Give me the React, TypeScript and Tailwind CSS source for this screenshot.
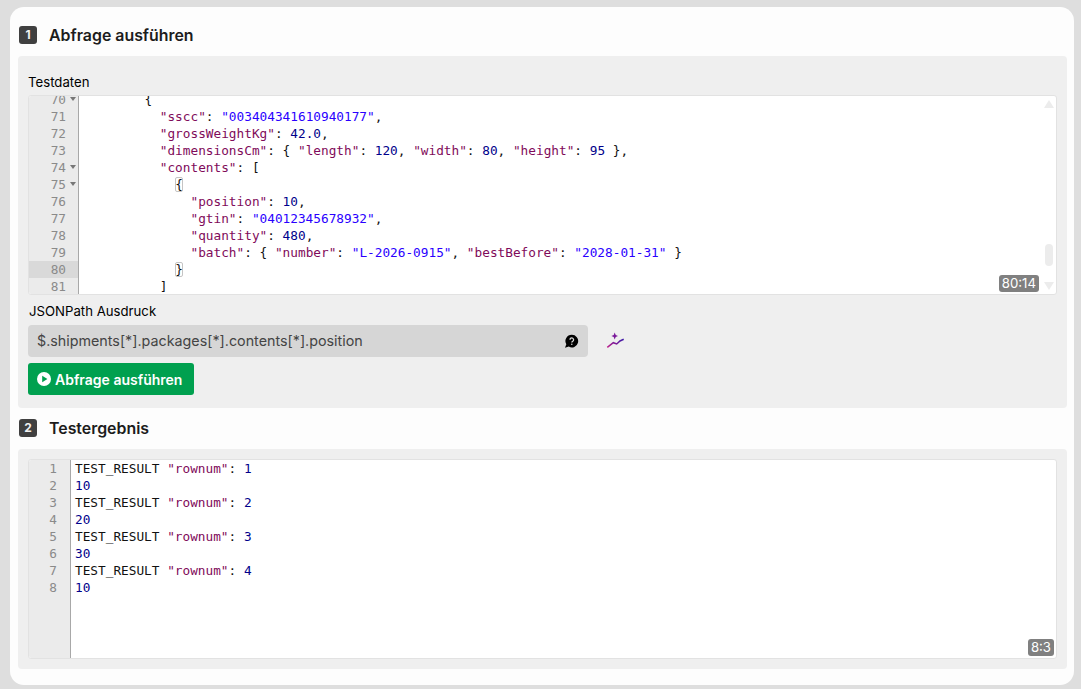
import React from "react";

type Tok = [string, string];
const K = "text-[#7f0b5a]";
const S = "text-[#2a00ff]";
const N = "text-[#00008b]";
const P = "text-[#111111]";

function k(t: string): Tok { return [t, K]; }
function s(t: string): Tok { return [t, S]; }
function n(t: string): Tok { return [t, N]; }
function p(t: string): Tok { return [t, P]; }

const jsonLines: { no: number; fold?: boolean; active?: boolean; indent: number; toks: Tok[]; box?: boolean }[] = [
  { no: 70, fold: true, indent: 8, toks: [p("{")] },
  { no: 71, indent: 10, toks: [k('"sscc"'), p(": "), s('"003404341610940177"'), p(",")] },
  { no: 72, indent: 10, toks: [k('"grossWeightKg"'), p(": "), n("42.0"), p(",")] },
  { no: 73, indent: 10, toks: [k('"dimensionsCm"'), p(": { "), k('"length"'), p(": "), n("120"), p(", "), k('"width"'), p(": "), n("80"), p(", "), k('"height"'), p(": "), n("95"), p(" },")] },
  { no: 74, fold: true, indent: 10, toks: [k('"contents"'), p(": [")] },
  { no: 75, fold: true, indent: 12, box: true, toks: [p("{")] },
  { no: 76, indent: 14, toks: [k('"position"'), p(": "), n("10"), p(",")] },
  { no: 77, indent: 14, toks: [k('"gtin"'), p(": "), s('"04012345678932"'), p(",")] },
  { no: 78, indent: 14, toks: [k('"quantity"'), p(": "), n("480"), p(",")] },
  { no: 79, indent: 14, toks: [k('"batch"'), p(": { "), k('"number"'), p(": "), s('"L-2026-0915"'), p(", "), k('"bestBefore"'), p(": "), s('"2028-01-31"'), p(" }")] },
  { no: 80, active: true, indent: 12, box: true, toks: [p("}")] },
  { no: 81, indent: 10, toks: [p("]")] },
];

const resultLines: Tok[][] = [
  [p("TEST_RESULT "), k('"rownum"'), p(": "), n("1")],
  [n("10")],
  [p("TEST_RESULT "), k('"rownum"'), p(": "), n("2")],
  [n("20")],
  [p("TEST_RESULT "), k('"rownum"'), p(": "), n("3")],
  [n("30")],
  [p("TEST_RESULT "), k('"rownum"'), p(": "), n("4")],
  [n("10")],
];

const mono = "font-['DejaVu_Sans_Mono','Liberation_Mono',monospace] text-[12.75px] leading-[17px]";

function Heading({ num, title }: { num: string; title: string }) {
  return (
    <div className="flex items-center h-[18px] pl-[9px] gap-[12px]">
      <span className="flex h-[18px] w-[18px] items-center justify-center rounded-[3px] bg-[#404040] text-[12px] font-bold text-[#f2f2f2]">{num}</span>
      <h2 className="pt-[2px] text-[15.9px] font-semibold leading-[18px] text-[#1c1c1c]">{title}</h2>
    </div>
  );
}

function Caret() {
  return (
    <svg className="absolute right-[2px] top-[6px]" width="6" height="4" viewBox="0 0 6 4">
      <path d="M0 0h6L3 4z" fill="#777" />
    </svg>
  );
}

function Tokens({ toks }: { toks: Tok[] }) {
  return (
    <>
      {toks.map((t, i) => (
        <span key={i} className={t[1]}>{t[0]}</span>
      ))}
    </>
  );
}

function App() {
  return (
    <div className="h-[689px] w-[1081px] overflow-hidden bg-[#dedede] pl-[10px] pr-[7px] pt-[7px] pb-[4px] font-['Inter',sans-serif]">
      <div className="h-[678px] rounded-[14px] bg-[#fdfdfd] pt-[19px]">
        <Heading num="1" title="Abfrage ausführen" />

        <section className="mt-[12px] ml-[8px] mr-[7px] h-[352px] rounded-[4px] bg-[#efefef] px-[10px]">
          <div className="pt-[19px] text-[13.2px] leading-[15px] text-black">Testdaten</div>
          <div className="relative mt-[5px] h-[200px] overflow-hidden rounded-[3px] border border-[#e2e2e2] bg-white">
            <div className={`-mt-[5px] ${mono}`}>
              {jsonLines.map((l) => (
                <div key={l.no} className="flex h-[17px]">
                  <div className={`relative w-[50px] shrink-0 border-r border-[#a8a8a8] pr-[12px] text-right text-[#8a8a8a] ${l.active ? "bg-[#d9d9d9]" : "bg-[#ebebeb]"}`}>
                    {l.no}
                    {l.fold ? <Caret /> : null}
                  </div>
                  <div className="whitespace-pre pl-[4px]">
                    {" ".repeat(l.indent)}
                    {l.box ? (
                      <span className="rounded-[2px] outline outline-1 -outline-offset-1 outline-[#c4c4c4] text-[#111]">{l.toks[0][0]}</span>
                    ) : (
                      <Tokens toks={l.toks} />
                    )}
                  </div>
                </div>
              ))}
            </div>
            <svg className="absolute right-[2px] top-[4px]" width="10" height="8" viewBox="0 0 10 8"><path d="M5 0l5 8H0z" fill="#ececec" /></svg>
            <div className="absolute right-[3px] top-[148px] h-[22px] w-[8px] rounded-[4px] bg-[#ececec]" />
            <svg className="absolute right-[2px] top-[186px]" width="10" height="8" viewBox="0 0 10 8"><path d="M5 8l5-8H0z" fill="#ececec" /></svg>
            <span className="absolute bottom-[2px] right-[17px] rounded-[3px] bg-[#808080] px-[3px] text-[13.2px] leading-[17px] text-white">80:14</span>
          </div>

          <div className="mt-[9px] pl-[1px] text-[13.2px] leading-[15px] text-black">JSONPath Ausdruck</div>
          <div className="mt-[6px] flex items-center">
            <div className="flex h-[32px] w-[560px] items-center justify-between rounded-[4px] bg-[#d6d6d6] pl-[9px] pr-[9px] text-[14.3px] text-[#444444]">
              <span>$.shipments[*].packages[*].contents[*].position</span>
              <svg width="15" height="15" viewBox="0 0 15 15">
                <path d="M7.800 .8a6.300 6.300 0 1 1-3 11.800L1 13.800l1.300-3.500A6.300 6.300 0 0 1 7.800 .8z" fill="#000" />
                <path d="M6 5.700a1.800 1.800 0 1 1 2.700 1.600c-.6.3-.9.6-.9 1.100" fill="none" stroke="#d6d6d6" strokeWidth="1.300" />
                <circle cx="7.800" cy="10.300" r=".8" fill="#d6d6d6" />
              </svg>
            </div>
            <svg className="ml-[18px]" width="18" height="18" viewBox="0 0 18 18">
              <defs>
                <linearGradient id="spark" x1="0" y1="1" x2="1" y2="0">
                  <stop offset="0" stopColor="#c0208a" />
                  <stop offset="1" stopColor="#3a1aa8" />
                </linearGradient>
              </defs>
              <path d="M1.300 15.300L7.300 10.700 10.700 12 14 9 17.700 7.300" fill="none" stroke="url(#spark)" strokeWidth="1.500" />
              <path d="M8.700 .6l1 2.400 2.300 1-2.300 1-1 2.400-1-2.400-2.300-1 2.300-1z" fill="#7a1a9a" />
            </svg>
          </div>
          <button className="mt-[6px] flex h-[32px] w-[166px] items-center justify-start gap-[4px] rounded-[3px] bg-[#00a04f] pl-[9px] text-[14px] font-semibold text-white">
            <svg width="14" height="14" viewBox="0 0 14 14">
              <circle cx="7" cy="7" r="7" fill="#fff" />
              <path d="M5.200 3.800v6.400L10.400 7z" fill="#00a04f" />
            </svg>
            Abfrage ausführen
          </button>
        </section>

        <div className="mt-[11px]">
          <Heading num="2" title="Testergebnis" />
        </div>

        <section className="mt-[12px] ml-[8px] mr-[7px] h-[220px] rounded-[4px] bg-[#efefef] px-[10px] pt-[10px]">
          <div className="relative h-[200px] overflow-hidden rounded-[3px] border border-[#e2e2e2] bg-white">
            <div className={`flex h-full ${mono}`}>
              <div className="w-[42px] shrink-0 border-r border-[#a8a8a8] bg-[#ebebeb] pr-[13px] text-right text-[#8a8a8a]">
                {resultLines.map((_, i) => (
                  <div key={i} className="h-[17px]">{i + 1}</div>
                ))}
              </div>
              <div className="pl-[4px]">
                {resultLines.map((l, i) => (
                  <div key={i} className="h-[17px] whitespace-pre"><Tokens toks={l} /></div>
                ))}
              </div>
            </div>
            <span className="absolute bottom-[2px] right-[2px] rounded-[3px] bg-[#808080] px-[3px] text-[13.2px] leading-[17px] text-white">8:3</span>
          </div>
        </section>
      </div>
    </div>
  );
}

export default App;
